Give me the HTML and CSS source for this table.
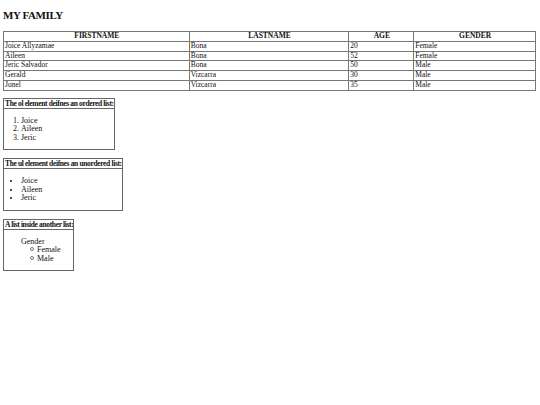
FILE: index.html
```html
<!DOCTYPE html>
<html>
<head>
<meta charset="utf-8">
<link rel="stylesheet" href="styles.css">
</head>
<body>
<h1 class="title">MY FAMILY</h1>
<table class="family">
  <colgroup>
    <col class="c1"><col class="c2"><col class="c3"><col class="c4">
  </colgroup>
  <thead>
    <tr><th>FIRSTNAME</th><th>LASTNAME</th><th>AGE</th><th>GENDER</th></tr>
  </thead>
  <tbody>
    <tr><td>Joice Allyzamae</td><td>Bona</td><td>20</td><td>Female</td></tr>
    <tr><td>Aileen</td><td>Bona</td><td>52</td><td>Female</td></tr>
    <tr><td>Jeric Salvador</td><td>Bona</td><td>50</td><td>Male</td></tr>
    <tr><td>Gerald</td><td>Vizcarra</td><td>30</td><td>Male</td></tr>
    <tr><td>Jonel</td><td>Vizcarra</td><td>35</td><td>Male</td></tr>
  </tbody>
</table>

<div class="box">
  <div class="box-head">The ol element deifnes an ordered list:</div>
  <ol class="list">
    <li>Joice</li>
    <li>Aileen</li>
    <li>Jeric</li>
  </ol>
</div>

<div class="box">
  <div class="box-head">The ul element deifnes an unordered list:</div>
  <ul class="list">
    <li>Joice</li>
    <li>Aileen</li>
    <li>Jeric</li>
  </ul>
</div>

<div class="box">
  <div class="box-head">A list inside another list:</div>
  <ul class="list plain">
    <li>Gender
      <ul class="sub">
        <li>Female</li>
        <li>Male</li>
      </ul>
    </li>
  </ul>
</div>
</body>
</html>
```

FILE: styles.css
```css
html, body {
  margin: 0;
  padding: 0;
  background: #fff;
}
body {
  padding: 0 4px 0 3px;
  font-family: "Liberation Serif", "Times New Roman", serif;
  color: #111;
  font-size: 8px;
}
.title {
  font-size: 11px;
  letter-spacing: -0.4px;
  font-weight: bold;
  margin: 0;
  padding-top: 9px;
  line-height: 13px;
  height: 22px;
}
.family {
  width: 533px;
  border-collapse: collapse;
  border: 1px solid #555;
  font-size: 7.5px;
  line-height: 8.75px;
}
.family th, .family td {
  border: 1px solid #777;
  padding: 0 0 0 1px;
  text-align: left;
  font-weight: normal;
}
.family th {
  font-weight: bold;
  text-align: center;
}
.c1 { width: 186px; }
.c2 { width: 160px; }
.c3 { width: 65px; }
.c4 { width: 122px; }

.box {
  display: table;
  border: 1px solid #666;
  margin-top: 7px;
}
.box + .box {
  margin-top: 8px;
}
.box-head {
  font-weight: bold;
  font-size: 7.5px;
  letter-spacing: -0.35px;
  line-height: 9px;
  border-bottom: 1px solid #666;
  padding: 0 0 0 1px;
  white-space: nowrap;
}
.list {
  margin: 8px 0 7px 0;
  padding-left: 17px;
  font-size: 8px;
  line-height: 8.5px;
}
.list.plain {
  list-style: none;
}
.sub {
  list-style: none;
  margin: 0;
  padding-left: 16px;
}
.sub li::before {
  content: "";
  display: inline-block;
  width: 2px;
  height: 2px;
  border: 1px solid #777;
  border-radius: 50%;
  margin-left: -7px;
  margin-right: 3px;
  vertical-align: 1px;
}
```
